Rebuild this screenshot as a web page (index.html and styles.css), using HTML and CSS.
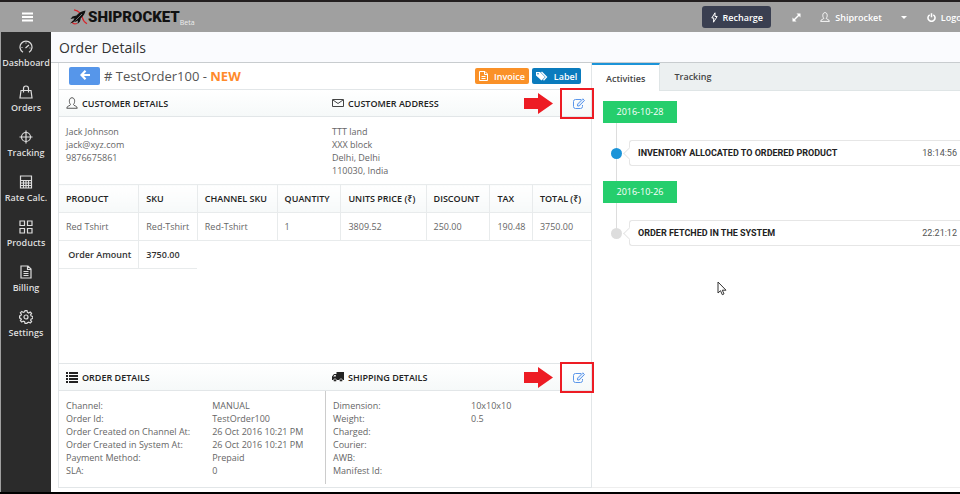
FILE: index.html
```html
<!DOCTYPE html>
<html lang="en">
<head>
  <meta charset="UTF-8">
  <title>Order Details</title>
  <meta name="viewport" content="width=device-width, initial-scale=1">
  <link rel="stylesheet" href="styles.css">
</head>
<body>

  <!-- top bar -->
  <header class="topbar">
    <button class="menu-btn" aria-label="Menu">
      <svg width="12" height="10" viewBox="0 0 12 10"><path d="M1 1.5h11M1 5h11M1 8.500h11" stroke="#fff" stroke-width="2"/></svg>
    </button>
    <a class="logo" href="#">
      <svg width="18" height="16" viewBox="0 0 18 16">
        <path d="M4 .8c5 .5 8 5 8.500 8 .5 2.500 2 4.500 4.500 6M2 13c1 2 3 2.200 5 1.500" fill="none" stroke="#d8232a" stroke-width="1.200"/>
        <path d="M15.500 1.500C11.500 2 8.500 4 6.500 6.500L2.500 7.500l-2 2.500 4-.8L3 12l2.500.8L8 11.500 7.500 15l2.500-2.500.8-3.300C13.500 7 15 4.500 15.500 1.500z" fill="#111"/>
        <path d="M3 11.500L0 14.500l4.500-1.700z" fill="#111"/>
        <path d="M5.500 11.500L12 5" stroke="#a0a0a0" stroke-width=".7"/>
      </svg>
      <span class="logo-text">SHIPROCKET</span>
      <span class="logo-beta">Beta</span>
    </a>
    <nav class="top-nav">
      <button class="recharge-btn">
        <svg width="7" height="11" viewBox="0 0 7 11"><path d="M4 .8L.8 6h2L2.500 10.200 6.200 4.500H4z" fill="none" stroke="#fff"/></svg>
        Recharge
      </button>
      <button class="top-link expand" aria-label="Full screen">
        <svg width="9" height="9" viewBox="0 0 9 9"><path d="M4.500 .5h4v4zM.5 4.500v4h4z" fill="#fff"/><path d="M2 7l5-5" stroke="#fff" stroke-width="1.500"/></svg>
      </button>
      <a class="top-link user" href="#">
        <svg width="10" height="10" viewBox="0 0 16 16"><path d="M6 10C3.500 7 4 1 8 1s4.500 6 2 9c0 2 5 1.500 5 5H1c0-3.500 5-3 5-5z" fill="none" stroke="#fff" stroke-width="1.500"/></svg>
        Shiprocket
      </a>
      <button class="top-link caret" aria-label="Account menu">
        <svg width="6" height="3" viewBox="0 0 6 3"><path d="M0 0h6L3 3z" fill="#fff"/></svg>
      </button>
      <a class="top-link" href="#">
        <svg width="9" height="9" viewBox="0 0 10 10"><path d="M3 2a3.900 3.900 0 1 0 4 0M5 .3v4.500" fill="none" stroke="#fff" stroke-width="1.700"/></svg>
        Logout
      </a>
    </nav>
  </header>

  <div class="wrapper">
    <!-- side menu -->
    <nav class="sidebar">
      <a href="#">
        <svg viewBox="0 0 14 14"><path d="M4 12.300a6 6 0 1 1 6 0M6.500 8L10 5M2.500 7.500h1M7 2.500v1M10.500 8h1"/></svg>
        Dashboard
      </a>
      <a href="#">
        <svg viewBox="0 0 14 14"><path d="M2 5.500h10l1 7.500H1zM4.500 7.500V3.500a2.500 2.500 0 0 1 5 0v4"/></svg>
        Orders
      </a>
      <a href="#">
        <svg viewBox="0 0 14 14"><circle cx="7" cy="7" r="4.500"/><path d="M7 .5v13M.5 7h13"/></svg>
        Tracking
      </a>
      <a href="#">
        <svg viewBox="0 0 14 14"><path d="M1.500 1h11v12h-11z"/><path d="M2 5.500h10M2 8h10M2 10.500h10M4.500 5.500V13M7 5.500V13M9.500 5.500V13"/></svg>
        Rate Calc.
      </a>
      <a href="#">
        <svg viewBox="0 0 14 14"><path d="M1 1h4.500v4.500H1zM8.500 1H13v4.500H8.500zM1 8.500h4.500V13H1zM8.500 8.500H13V13H8.500z"/></svg>
        Products
      </a>
      <a href="#">
        <svg viewBox="0 0 14 14"><path d="M2 1h7l3 3v9H2zM8.500 1v3.500H12M4.500 6.500h5M4.500 8.500h5M4.500 10.500h5"/></svg>
        Billing
      </a>
      <a href="#">
        <svg viewBox="0 0 14 14"><path d="M6 .7h2l.4 1.700 1.300.6 1.500-1 1.400 1.400-1 1.500.6 1.200 1.600.4v2l-1.600.4-.6 1.300 1 1.500-1.400 1.400-1.500-1-1.300.6L8 13.300H6l-.4-1.600-1.300-.6-1.500 1-1.400-1.400 1-1.500L1.800 8.500.6 8V6l1.200-.5.6-1.200-1-1.500 1.400-1.400 1.500 1 1.300-.6z"/><circle cx="7" cy="7" r="2"/></svg>
        Settings
      </a>
    </nav>

    <main class="content">
      <h1 class="page-title">Order Details</h1>

      <div class="columns">
        <!-- order -->
        <section class="order">
          <div class="order-head">
            <button class="back-btn" aria-label="Back">
              <svg width="10" height="10" viewBox="0 0 10 10"><path d="M5.500 .8L1.500 5l4 4.200M1.800 5H10" fill="none" stroke="#fff" stroke-width="2.200"/></svg>
            </button>
            <h2># TestOrder100 - <b>NEW</b></h2>
            <button class="tag-btn invoice">
              <svg width="9" height="10" viewBox="0 0 9 10"><path d="M.5 .5h5.500L8.500 3v6.500h-8zM5.500 .5v3h3M2.500 5.500h4M2.500 7.500h4" fill="none" stroke="#fff"/></svg>
              Invoice
            </button>
            <button class="tag-btn label">
              <svg width="12" height="10" viewBox="0 0 12 10"><path d="M0 1h4l5 5-3.500 3.500L0 4.500z" fill="#fff"/><path d="M5.500 1L10.500 6 7.500 9.300" fill="none" stroke="#fff" stroke-width="1.300"/><circle cx="2" cy="2.800" r=".8" fill="#0a7bbd"/></svg>
              Label
            </button>
          </div>

          <div class="section-head">
            <h3>
              <svg width="12" height="12" viewBox="0 0 16 16"><path d="M6 10C3.500 7 4 1 8 1s4.500 6 2 9c0 2 5 1.500 5 5H1c0-3.500 5-3 5-5z" fill="none" stroke="#444" stroke-width="1.200"/></svg>
              CUSTOMER DETAILS
            </h3>
            <h3>
              <svg width="12" height="8" viewBox="0 0 12 8"><path d="M.5 .5h11v7H.5zM1 1l5 3.500L11 1" fill="none" stroke="#444"/></svg>
              CUSTOMER ADDRESS
            </h3>
            <svg class="arrow" width="30" height="22" viewBox="0 0 30 22"><path d="M0 5h14V0l15 10.500L14 21v-5H0z" fill="#ed1c24"/></svg>
            <button class="edit-btn" aria-label="Edit customer">
              <svg width="12" height="11" viewBox="0 0 12 11"><path d="M8 1.500H2.500a2 2 0 0 0-2 2v5a2 2 0 0 0 2 2h5a2 2 0 0 0 2-2V7" fill="none" stroke="#5b96ea"/><path d="M4.500 8V6.200L9.800 .8l1.700 1.700L6.200 8z" fill="#dce9fb" stroke="#5b96ea"/></svg>
            </button>
          </div>

          <div class="section-body">
            <p>Jack Johnson<br>jack@xyz.com<br>9876675861</p>
            <p>TTT land<br>XXX block<br>Delhi, Delhi<br>110030, India</p>
          </div>

          <table class="items">
            <colgroup>
              <col class="c-product"><col class="c-sku"><col class="c-channel"><col class="c-qty"><col class="c-price"><col class="c-discount"><col class="c-tax"><col class="c-total">
            </colgroup>
            <thead>
              <tr>
                <th>PRODUCT</th>
                <th>SKU</th>
                <th>CHANNEL SKU</th>
                <th>QUANTITY</th>
                <th>UNITS PRICE (₹)</th>
                <th>DISCOUNT</th>
                <th>TAX</th>
                <th>TOTAL (₹)</th>
              </tr>
            </thead>
            <tbody>
              <tr>
                <td>Red Tshirt</td>
                <td>Red-Tshirt</td>
                <td>Red-Tshirt</td>
                <td>1</td>
                <td>3809.52</td>
                <td>250.00</td>
                <td>190.48</td>
                <td>3750.00</td>
              </tr>
            </tbody>
            <tfoot>
              <tr>
                <th>Order Amount</th>
                <td>3750.00</td>
              </tr>
            </tfoot>
          </table>

          <div class="section-head bottom">
            <h3>
              <svg width="12" height="11" viewBox="0 0 12 11"><path d="M0 1h2M3 1h9M0 4h2M3 4h9M0 7h2M3 7h9M0 10h2M3 10h9" stroke="#222" stroke-width="2"/></svg>
              ORDER DETAILS
            </h3>
            <h3>
              <svg width="12" height="10" viewBox="0 0 12 10"><path d="M4.500 0H12v8H0V4.500L2 2h2.500z" fill="#222"/><path d="M1.200 4.500L2.500 3h1.300v1.500z" fill="#fff"/><circle cx="3" cy="8.300" r="1.500" fill="#222" stroke="#fff" stroke-width=".6"/><circle cx="9" cy="8.300" r="1.500" fill="#222" stroke="#fff" stroke-width=".6"/></svg>
              SHIPPING DETAILS
            </h3>
            <svg class="arrow" width="30" height="22" viewBox="0 0 30 22"><path d="M0 5h14V0l15 10.500L14 21v-5H0z" fill="#ed1c24"/></svg>
            <button class="edit-btn" aria-label="Edit shipping">
              <svg width="12" height="11" viewBox="0 0 12 11"><path d="M8 1.500H2.500a2 2 0 0 0-2 2v5a2 2 0 0 0 2 2h5a2 2 0 0 0 2-2V7" fill="none" stroke="#5b96ea"/><path d="M4.500 8V6.200L9.800 .8l1.700 1.700L6.200 8z" fill="#dce9fb" stroke="#5b96ea"/></svg>
            </button>
          </div>

          <div class="section-body details">
            <dl>
              <dt>Channel:</dt><dd>MANUAL</dd>
              <dt>Order Id:</dt><dd>TestOrder100</dd>
              <dt>Order Created on Channel At:</dt><dd>26 Oct 2016 10:21 PM</dd>
              <dt>Order Created in System At:</dt><dd>26 Oct 2016 10:21 PM</dd>
              <dt>Payment Method:</dt><dd>Prepaid</dd>
              <dt>SLA:</dt><dd>0</dd>
            </dl>
            <dl class="shipping">
              <dt>Dimension:</dt><dd>10x10x10</dd>
              <dt>Weight:</dt><dd>0.5</dd>
              <dt>Charged:</dt><dd></dd>
              <dt>Courier:</dt><dd></dd>
              <dt>AWB:</dt><dd></dd>
              <dt>Manifest Id:</dt><dd></dd>
            </dl>
          </div>
        </section>

        <!-- activities -->
        <section class="activity">
          <div class="tabs">
            <button class="tab active">Activities</button>
            <button class="tab">Tracking</button>
          </div>
          <div class="timeline">
            <span class="date">2016-10-28</span>
            <div class="event current">
              <b>INVENTORY ALLOCATED TO ORDERED PRODUCT</b>
              <time>18:14:56</time>
            </div>
            <span class="date">2016-10-26</span>
            <div class="event">
              <b>ORDER FETCHED IN THE SYSTEM</b>
              <time>22:21:12</time>
            </div>
          </div>
        </section>
      </div>
    </main>
  </div>

  <svg class="cursor" width="10" height="15" viewBox="0 0 10 15"><path d="M1 1v11l2.500-2.300 1.800 4 1.700-.8-1.700-3.700H9z" fill="#fff" stroke="#333"/></svg>

</body>
</html>
```

FILE: styles.css
```css
* {
  box-sizing: border-box;
}

body {
  display: flex;
  flex-direction: column;
  min-height: 100vh;
  margin: 0;
  border-top: 2px solid #231f20;
  border-bottom: 2px solid #000;
  font-family: "Open Sans", "Noto Sans", sans-serif;
  font-size: 9px;
  line-height: 13px;
  color: #666;
  background: #fff;
  overflow: hidden;
}

h1, h2, h3, p, dl, dd {
  margin: 0;
}

button {
  padding: 0;
  border: 0;
  background: none;
  font: inherit;
  color: inherit;
  cursor: pointer;
}

a {
  color: inherit;
  text-decoration: none;
}

svg {
  flex: none;
}

/* top bar */
.topbar {
  display: flex;
  align-items: center;
  height: 30px;
  background: #a0a0a0;
  color: #fff;
  overflow: hidden;
}

.menu-btn {
  width: 54px;
  height: 10px;
  line-height: 0;
}

.logo {
  display: flex;
  align-items: center;
  margin-left: 16px;
}

.logo-text {
  font-family: Roboto, sans-serif;
  font-size: 15px;
  font-weight: 900;
  line-height: 20px;
  color: #111;
}

.logo-beta {
  align-self: flex-end;
  font-size: 7px;
  line-height: 9px;
  color: #eee;
}

/* the nav runs a little past the right edge */
.top-nav {
  display: flex;
  align-items: center;
  margin-left: auto;
  margin-right: -11px;
  font-weight: 600;
}

.recharge-btn {
  display: flex;
  align-items: center;
  justify-content: center;
  gap: 5px;
  width: 69px;
  height: 22px;
  margin-right: 21px;
  border-radius: 3px;
  background: #3a3f51;
}

.top-link {
  display: flex;
  align-items: center;
  gap: 5px;
}

.expand,
.user {
  margin-right: 19px;
}

.caret {
  margin-right: 20px;
}

/* side menu */
.wrapper {
  display: flex;
  flex: 1;
}

.sidebar {
  flex: none;
  width: 51px;
  border-left: 1px solid #a0a0a0;
  background: #2b2b2b;
  color: #ddd;
  font-weight: 600;
}

.sidebar a {
  display: flex;
  flex-direction: column;
  align-items: center;
  gap: 2px;
  padding: 8px 0;
}

.sidebar svg {
  width: 14px;
  height: 14px;
  fill: none;
  stroke: #ddd;
  stroke-width: 1.2;
}

/* content */
.content {
  display: flex;
  flex-direction: column;
  flex: 1;
  min-width: 0;
}

.page-title {
  padding: 5px 8px 4px;
  border-bottom: 1px solid #c8cccf;
  background: #fafbfe;
  font-size: 14px;
  font-weight: 400;
  line-height: 21px;
  color: #333;
}

.columns {
  display: grid;
  grid-template-columns: 534fr 368fr;
  flex: 1;
  padding: 0 0 4px 7px;
}

.order {
  display: flex;
  flex-direction: column;
  border: 1px solid #e2e6e8;
  border-top: 0;
}

.order-head {
  display: flex;
  align-items: center;
  gap: 3px;
  height: 26px;
  padding: 0 10px;
}

.order-head h2 {
  margin-right: auto;
  font-size: 13px;
  font-weight: 400;
  line-height: 18px;
  color: #555;
}

.order-head h2 b {
  color: #ff8a2b;
}

.back-btn {
  width: 31px;
  height: 18px;
  margin-right: 1px;
  border-radius: 2px;
  background: #5696ea;
}

.tag-btn {
  display: flex;
  align-items: center;
  justify-content: center;
  gap: 6px;
  height: 16px;
  border-radius: 2px;
  font-weight: 600;
  color: #fff;
}

.invoice {
  width: 54px;
  background: #fa9128;
}

.label {
  width: 49px;
  background: #0a7bbd;
}

.section-head {
  position: relative;
  display: grid;
  grid-template-columns: 1fr 1fr;
  align-items: center;
  height: 28px;
  border-top: 1px solid #e2e6e8;
  border-bottom: 1px solid #e2e6e8;
  background: linear-gradient(#fff, #f6f9f9);
}

.section-head h3 {
  display: flex;
  align-items: center;
  gap: 4px;
  padding: 0 7px;
  font-size: 9px;
  font-weight: 600;
  color: #222;
}

.bottom {
  margin-top: auto;
}

/* marker around the edit button */
.edit-btn {
  position: absolute;
  top: -2px;
  right: -3px;
  display: flex;
  align-items: center;
  justify-content: center;
  width: 34px;
  height: 31px;
  padding-left: 3px;
  border: 2px solid #ed1c24;
}

.arrow {
  position: absolute;
  top: 3px;
  right: 37px;
}

.section-body {
  display: grid;
  grid-template-columns: 1fr 1fr;
}

.section-body p,
.section-body dl {
  padding: 8px 7px 7px;
}

.details {
  padding-bottom: 3px;
}

.details dl {
  display: grid;
  grid-template-columns: 58% 1fr;
  grid-auto-rows: 13px;
}

.details .shipping {
  grid-template-columns: 55% 1fr;
  border-left: 1px solid #ccc;
}

/* items table */
.items {
  width: 100%;
  table-layout: fixed;
  border-collapse: collapse;
}

.c-product { width: 15%; }
.c-sku { width: 11%; }
.c-channel { width: 15%; }
.c-qty { width: 12%; }
.c-price { width: 16%; }
.c-discount { width: 12%; }
.c-tax { width: 8%; }
.c-total { width: 11%; }

.items th,
.items td {
  height: 28px;
  padding: 0 0 0 7px;
  border: 1px solid #e8ebec;
  text-align: left;
  white-space: nowrap;
}

.items th:first-child,
.items td:first-child {
  border-left: 0;
}

.items th:last-child,
.items tbody td:last-child {
  border-right: 0;
}

.items th {
  font-weight: 600;
  color: #222;
}

.items thead th {
  background: linear-gradient(#fff, #f6f9f9);
}

.items tfoot th,
.items tfoot td {
  border-top-color: #c4c4c4;
  background: none;
  font-weight: 600;
  color: #333;
}

.items tfoot td {
  border-right: 0;
}

.items tfoot th {
  padding-right: 7px;
  text-align: right;
}

/* activities */
.activity {
  border-bottom: 1px solid #eee;
}

.tabs {
  display: flex;
  height: 28px;
  border-bottom: 1px solid #dfe5e6;
  background: #ecf0f1;
}

.tab {
  padding: 0 14px;
  font-weight: 600;
  color: #444;
}

.tab.active {
  height: 28px;
  border-top: 2px solid #1c94d8;
  border-right: 1px solid #dfe5e6;
  background: #fff;
}

.timeline {
  position: relative;
  padding: 10px 0 0 11px;
}

.timeline::before {
  content: "";
  position: absolute;
  top: 10px;
  bottom: 13px;
  left: 24px;
  width: 1px;
  background: #ddd;
}

.date {
  position: relative;
  display: block;
  width: 74px;
  height: 22px;
  background: #25ce6d;
  line-height: 22px;
  text-align: center;
  color: #fff;
}

.event {
  position: relative;
  display: flex;
  align-items: center;
  justify-content: space-between;
  height: 26px;
  margin: 17px 0 15px 26px;
  padding: 0 3px 0 8px;
  border: 1px solid #e6e6e6;
  border-right: 0;
  border-radius: 3px 0 0 3px;
  font-family: Roboto, sans-serif;
  color: #555;
}

.event b {
  color: #222;
}

.event:last-child {
  margin-bottom: 0;
}

/* dot on the line */
.event::before {
  content: "";
  position: absolute;
  left: -19px;
  width: 11px;
  height: 11px;
  border-radius: 50%;
  background: #ddd;
}

.event.current::before {
  background: #1c94d8;
}

/* pointer of the bubble */
.event::after {
  content: "";
  position: absolute;
  left: -5px;
  width: 8px;
  height: 8px;
  border: solid #e6e6e6;
  border-width: 0 0 1px 1px;
  background: #fff;
  transform: rotate(45deg);
}

.cursor {
  position: absolute;
  top: 281px;
  left: 717px;
}
```
